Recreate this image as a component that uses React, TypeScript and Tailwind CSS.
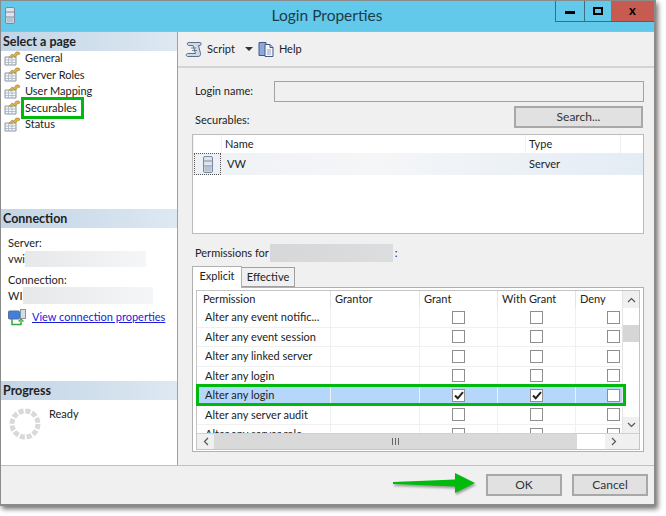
import React from "react";

const rows = [
  { name: "Alter any event notific...", grant: false, withGrant: false },
  { name: "Alter any event session", grant: false, withGrant: false },
  { name: "Alter any linked server", grant: false, withGrant: false },
  { name: "Alter any login", grant: false, withGrant: false },
  { name: "Alter any login", grant: true, withGrant: true, selected: true },
  { name: "Alter any server audit", grant: false, withGrant: false },
  { name: "Alter any server role", grant: false, withGrant: false },
];

const pages = ["General", "Server Roles", "User Mapping", "Securables", "Status"];

const PageIcon = () => (
  <svg width="17" height="15" viewBox="0 0 17 15" className="shrink-0">
    <path d="M1 6h11v8H1z" fill="#f4f6f8" stroke="#8c97a6" />
    <path d="M1 9h11M1 11.5h11M4.5 6v8M8 6v8" stroke="#a9b4c2" strokeWidth="0.8" />
    <path d="M5 6l3-3 2 1 2-3h3l1 2-3 1-1 2-3-1-2 2z" fill="#d9b24a" stroke="#94772a" strokeWidth="0.5" />
  </svg>
);

const ServerIcon = ({ className = "" }: { className?: string }) => (
  <svg width="10" height="17" viewBox="0 0 10 17" className={className}>
    <rect x="0.5" y="0.5" width="9" height="16" rx="1.5" fill="#dfe4ea" stroke="#7b8aa0" />
    <path d="M1 5h8M1 10h8" stroke="#7b8aa0" />
    <rect x="1.5" y="11" width="7" height="4.5" fill="#b5c3d4" />
  </svg>
);

const ScriptIcon = () => (
  <svg width="18" height="17" viewBox="0 0 18 17">
    <path d="M3 1.5h12c1.5 0 1.5 2.5 0 3h-1.500l2 8c.4 2-1 3-2.500 3H3c-2 0-2.500-2.500-.5-3h8L8 4.500 3.500 4.500C2 4 2 2 3 1.500z" fill="#cfd9e6" stroke="#5d6f8a" />
    <path d="M6 7h5M7 9.500h5" stroke="#5d6f8a" strokeWidth="0.8" />
  </svg>
);

const HelpIcon = () => (
  <svg width="17" height="17" viewBox="0 0 17 17">
    <path d="M1 1.500h7v13H1z" fill="#8fa9d6" stroke="#41598c" />
    <path d="M7 3.500h5l3 3v9H7z" fill="#f4f6fa" stroke="#41598c" />
    <path d="M12 3.500v3h3" fill="none" stroke="#41598c" />
    <path d="M9 9h4M9 11h4M9 13h4" stroke="#7d8fb0" strokeWidth="0.8" />
  </svg>
);

const ConnectionIcon = () => (
  <svg width="18" height="17" viewBox="0 0 18 17">
    <rect x="0.500" y="2" width="11" height="8" rx="1" fill="#3f7fe0" stroke="#5d6f8a" />
    <rect x="12.500" y="0.500" width="5" height="9" fill="#d8dde4" stroke="#8a94a3" />
    <path d="M4 10v5.500h9v-4" fill="none" stroke="#35a83a" strokeWidth="1.500" />
    <path d="M10.500 12.500l2.500-2.500 2.500 2.500" fill="none" stroke="#35a83a" strokeWidth="1.200" />
  </svg>
);

const Spinner = () => (
  <svg width="32" height="32" viewBox="0 0 32 32">
    <circle cx="16" cy="16" r="13" fill="none" stroke="#d9d9d9" strokeWidth="5" strokeDasharray="5 1.800" />
  </svg>
);

const Arrow = () => (
  <svg width="84" height="22" viewBox="0 0 84 22" className="drop-shadow-[1px_2px_1px_rgba(0,0,0,0.35)]">
    <path d="M0 9L62 6.500V0l20 10-20 10v-6.500L0 11z" fill="#00bb0c" />
  </svg>
);

const Check = ({ on }: { on: boolean }) => (
  <span className="w-[13px] h-[13px] bg-white border border-[#8e8e8e] flex items-center justify-center">
    {on && (
      <svg width="10" height="9" viewBox="0 0 10 9">
        <path d="M1 4.500l2.700 2.800L9 1.200" fill="none" stroke="#222" strokeWidth="2" />
      </svg>
    )}
  </span>
);

const Blur = ({ className }: { className: string }) => (
  <span className={"inline-block align-top bg-gradient-to-r from-[#e6e8ea] to-[#f5f6f7] blur-[0.5px] " + className} />
);

const SectionHeader = ({ children }: { children: React.ReactNode }) => (
  <div className="h-[19px] pl-[2px] pt-[1px] flex items-center font-bold text-[12.5px] text-[#222] bg-gradient-to-r from-[#c3d5e6] to-[#dde8f2]">
    {children}
  </div>
);

const HeadCell = ({ children, className = "" }: { children?: React.ReactNode; className?: string }) => (
  <div className={"bg-white flex items-center " + className}>{children}</div>
);

const Button = ({ children, className = "" }: { children: React.ReactNode; className?: string }) => (
  <button className={"bg-[#e1e1e1] border-2 border-[#a8a8a8] text-[#333] text-[12px] flex items-center justify-center " + className}>
    {children}
  </button>
);

export default function App() {
  return (
    <div className="w-[666px] h-[516px] bg-white overflow-hidden text-[11px] text-[#222] font-['Lato','Liberation_Sans',sans-serif]">
      <div className="w-[656px] h-[506px] flex flex-col bg-[#f0f0f0] border-t border-l border-r-2 border-b-2 border-[#8b8b8b] shadow-[2px_3px_5px_rgba(0,0,0,0.55)]">
        {/* title bar */}
        <div className="h-[31px] shrink-0 bg-[#62c9ea] border-b border-[#8fc0d2] flex items-start">
          <ServerIcon className="ml-[4px] mt-[6px]" />
          <div className="flex-1 h-[30px] flex items-center justify-center text-[15.5px] text-[#1d3b4a] pl-[84px]">Login Properties</div>
          <div className="flex h-[21px]">
            <div className="w-[29px] border-l border-b border-[#3c6d80] flex items-center justify-center">
              <span className="w-[10px] h-[3px] bg-black mt-[2px]" />
            </div>
            <div className="w-[27px] border-l border-b border-[#3c6d80] flex items-center justify-center">
              <span className="w-[10px] h-[8px] border-2 border-black" />
            </div>
            <div className="w-[43px] bg-[#c75b52] border-b border-[#8b4a45] flex items-center justify-center font-bold text-[13px] text-black">x</div>
          </div>
        </div>

        {/* body */}
        <div className="flex-1 flex min-h-0">
          <div className="w-[177px] shrink-0 bg-white border-r border-[#a0a0a0] flex flex-col">
            <SectionHeader>Select a page</SectionHeader>
            <ul className="h-[158px] -mt-[1px]">
              {pages.map((p) => (
                <li key={p} className="h-[16.500px] flex items-center gap-[4px] pl-[3px]">
                  <PageIcon />
                  <span className={p === "Securables" ? "relative" : ""}>
                    {p}
                    {p === "Securables" && (
                      <span className="absolute -left-[4px] -right-[7px] -top-[3px] -bottom-[3px] border-[3px] border-[#00b90c]" />
                    )}
                  </span>
                </li>
              ))}
            </ul>
            <div className="mt-[1px]"><SectionHeader>Connection</SectionHeader></div>
            <div className="h-[153px] pl-[7px] pt-[7px]">
              <div className="h-[14px]">Server:</div>
              <div className="h-[16px] mt-[2px] leading-[16px]">vwi<Blur className="w-[121px] h-[16px]" /></div>
              <div className="h-[15px] mt-[5px]">Connection:</div>
              <div className="h-[17px] leading-[17px]">WI<Blur className="w-[130px] h-[17px] ml-[1px]" /></div>
              <div className="flex items-center gap-[6px] mt-[4px] h-[18px]">
                <ConnectionIcon />
                <a href="#" className="text-[#1a1ae0] underline whitespace-nowrap">View connection properties</a>
              </div>
            </div>
            <SectionHeader>Progress</SectionHeader>
            <div className="flex pl-[8px] pt-[8px] gap-[8px]">
              <Spinner />
              <span className="-mt-[2px]">Ready</span>
            </div>
          </div>

          <div className="flex-1 min-w-0 flex flex-col">
            <div className="h-[36px] shrink-0 border-b-2 border-[#d4d4d4] flex items-center pl-[7px]">
              <ScriptIcon />
              <span className="ml-[4px]">Script</span>
              <span className="ml-[10px] w-0 h-0 border-x-[4px] border-x-transparent border-t-[4px] border-t-[#333]" />
              <span className="ml-[5px] flex"><HelpIcon /></span>
              <span className="ml-[4px]">Help</span>
            </div>

            <div className="pl-[14px] pr-[10px] flex flex-col">
              <div className="flex items-center h-[20px] mt-[13px] justify-between">
                <span className="pl-[3px] pt-[1px]">Login name:</span>
                <div className="w-[370px] h-[21px] bg-[#f0f0f0] border border-[#a2a2a2]" />
              </div>
              <div className="flex items-center justify-between h-[22px] mt-[5px]">
                <span className="pl-[3px] pt-[6px]">Securables:</span>
                <Button className="w-[129px] h-[22px] mr-[1px]">Search...</Button>
              </div>

              {/* securables grid */}
              <div className="h-[100px] mt-[6px] bg-white border border-[#bcbcbc] flex flex-col">
                <div className="h-[18px] bg-[#f0f0f0] grid grid-cols-[27px_303px_94px_1fr] gap-x-[1px] pl-[1px]">
                  <HeadCell />
                  <HeadCell className="pl-[3px]">Name</HeadCell>
                  <HeadCell className="pl-[3px]">Type</HeadCell>
                  <HeadCell />
                </div>
                <div className="h-[22px] grid grid-cols-[27px_303px_94px_1fr] gap-x-[1px] pl-[1px] bg-gradient-to-r from-[#eef1f5] via-[#f5f6f8] via-40% to-[#e4ecf4]">
                  <div className="border border-dotted border-[#555] flex items-center justify-center bg-[#edf0f4]">
                    <ServerIcon />
                  </div>
                  <div className="pl-[5px] flex items-center">VW</div>
                  <div className="pl-[3px] flex items-center">Server</div>
                  <div />
                </div>
              </div>

              <div className="h-[18px] mt-[10px] flex items-center pl-[3px]">
                Permissions for<Blur className="w-[123px] h-[18px] ml-[1px] mr-[2px] from-[#d5d7d9]! to-[#dcdddf]!" />:
              </div>

              {/* tabs */}
              <div className="flex items-end h-[21px] mt-[4px] relative z-10">
                <div className="w-[50px] h-[22px] -mb-[1px] pb-[3px] bg-white border border-b-0 border-[#b0b0b0] flex items-center justify-center">Explicit</div>
                <div className="w-[53px] h-[20px] bg-[#f0f0f0] border border-l-0 border-[#a0a0a0] flex items-center justify-center">Effective</div>
              </div>
              <div className="h-[165px] w-[452px] bg-white border border-[#b0b0b0] px-[3px] py-[2px]">
                <div className="relative h-[160px] border border-[#c4c4c4] flex flex-col">
                  <div className="flex-1 flex min-h-0">
                    <div className="w-[426px] overflow-hidden">
                      <div className="w-[457px]">
                        <div className="grid grid-cols-[134px_89px_78px_78px_78px] h-[17px] bg-[#f0f0f0]">
                          <div className="bg-white border-r border-[#e4e4e4] pl-[6px] pb-[1px] flex items-center">Permission</div>
                          <div className="bg-white border-r border-[#e4e4e4] pl-[4px] pb-[1px] flex items-center">Grantor</div>
                          <div className="bg-white border-r border-[#e4e4e4] pl-[4px] pb-[1px] flex items-center">Grant</div>
                          <div className="bg-white border-r border-[#e4e4e4] pl-[4px] pb-[1px] flex items-center">With Grant</div>
                          <div className="bg-white pl-[4px] pb-[1px] flex items-center">Deny</div>
                        </div>
                        {rows.map((r, i) => (
                          <div
                            key={i}
                            className={"grid grid-cols-[134px_89px_78px_78px_78px] h-[19.500px] items-stretch border-b border-[#f0f0f0] " + (r.selected ? "bg-[#b5d7fb]" : "bg-white")}
                          >
                            <div className="pl-[8px] flex items-center border-r border-[#f0f0f0] whitespace-nowrap">{r.name}</div>
                            <div className="border-r border-[#f0f0f0]" />
                            <div className="flex items-center justify-center border-r border-[#f0f0f0]"><Check on={r.grant} /></div>
                            <div className="flex items-center justify-center border-r border-[#f0f0f0]"><Check on={r.withGrant} /></div>
                            <div className="flex items-center justify-center pr-[4px]"><Check on={false} /></div>
                          </div>
                        ))}
                      </div>
                    </div>
                    <div className="w-[17px] border-l border-[#e4e4e4] flex flex-col bg-white text-[#555]">
                      <div className="h-[17px] flex items-center justify-center bg-[#f0f0f0]">
                        <svg width="9" height="6" viewBox="0 0 9 6"><path d="M1 5l3.500-3.500L8 5" fill="none" stroke="#555" strokeWidth="1.200" /></svg>
                      </div>
                      <div className="h-[17px]" />
                      <div className="h-[17px] bg-[#d6d6d6]" />
                      <div className="flex-1" />
                      <div className="h-[16px] flex items-center justify-center bg-[#f0f0f0]">
                        <svg width="9" height="6" viewBox="0 0 9 6"><path d="M1 1l3.500 3.500L8 1" fill="none" stroke="#555" strokeWidth="1.200" /></svg>
                      </div>
                    </div>
                  </div>
                  {/* horizontal scrollbar */}
                  <div className="h-[16px] shrink-0 flex bg-white border-t border-[#d0d0d0]">
                    <div className="w-[17px] flex items-center justify-center bg-[#f0f0f0]">
                      <svg width="6" height="9" viewBox="0 0 6 9"><path d="M5 1L1.500 4.500 5 8" fill="none" stroke="#555" strokeWidth="1.200" /></svg>
                    </div>
                    <div className="w-[363px] bg-[#d9d9d9] flex items-center justify-center">
                      <span className="w-[7px] h-[7px] border-x border-[#666] relative after:absolute after:left-[2px] after:top-0 after:w-[1px] after:h-[7px] after:bg-[#666]" />
                    </div>
                    <div className="w-[28px]" />
                    <div className="w-[17px] flex items-center justify-center bg-[#f0f0f0]">
                      <svg width="6" height="9" viewBox="0 0 6 9"><path d="M1 1l3.500 3.500L1 8" fill="none" stroke="#555" strokeWidth="1.200" /></svg>
                    </div>
                    <div className="flex-1 bg-[#f0f0f0]" />
                  </div>
                  {/* green highlight over the selected row */}
                  <span className="absolute -left-[1px] top-[93px] w-[430px] h-[22px] border-[3px] border-[#00b90c]" />
                </div>
              </div>
            </div>
          </div>
        </div>

        {/* footer */}
        <div className="h-[39px] shrink-0 border-t border-[#c0c0c0] flex items-center justify-end pr-[6px] bg-[#f0f0f0]">
          <span className="mr-[9px] -mt-[2px] flex"><Arrow /></span>
          <Button className="w-[76px] h-[22px] border-[#7fa8c9]">OK</Button>
          <Button className="w-[76px] h-[22px] ml-[10px]">Cancel</Button>
        </div>
      </div>
    </div>
  );
}
